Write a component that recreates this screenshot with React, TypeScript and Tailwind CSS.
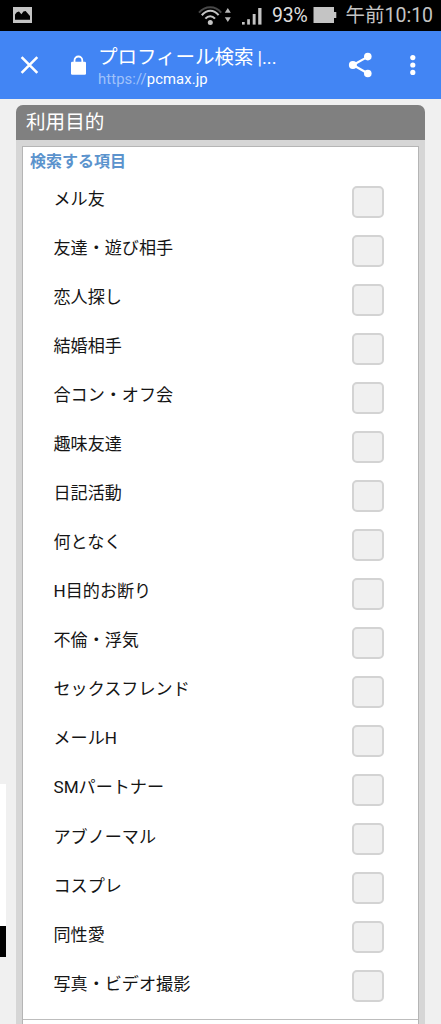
const items = [
  'メル友',
  '友達・遊び相手',
  '恋人探し',
  '結婚相手',
  '合コン・オフ会',
  '趣味友達',
  '日記活動',
  '何となく',
  'H目的お断り',
  '不倫・浮気',
  'セックスフレンド',
  'メールH',
  'SMパートナー',
  'アブノーマル',
  'コスプレ',
  '同性愛',
  '写真・ビデオ撮影',
];

function StatusBar() {
  return (
    <div className="flex h-[30.5px] shrink-0 items-center bg-black pl-[13px] text-[#c4c4c4]">
      <svg className="shrink-0" width="19" height="16" viewBox="0 0 19 16">
        <rect width="19" height="16" fill="#c4c4c4" />
        <path d="M2 12.8V7.5L3.8 5.2L6 4.4L8.4 7.2L10.4 4.4L12.6 4L17 9V12.8Z" fill="#000" />
      </svg>
      <svg className="ml-[166px] shrink-0" width="34" height="22" viewBox="0 0 34 22" fill="none">
        <path d="M1 8.6C7.2 1.5 17.4 1.5 23.2 8.6" stroke="#484848" strokeWidth="2" />
        <path d="M3.8 11.2C9 5.3 15.8 5.3 20.6 11.2" stroke="#c4c4c4" strokeWidth="2.1" />
        <path d="M7.4 14.6C10.3 11.4 14.1 11.4 17 14.6" stroke="#c4c4c4" strokeWidth="2.1" />
        <circle cx="12.3" cy="18.4" r="2.5" fill="#c4c4c4" />
        <path d="M26.8 8.8L29.8 4L32.8 8.8ZM26.8 13.2L29.8 18L32.8 13.2Z" fill="#b8b8b8" />
      </svg>
      <svg className="ml-[9px] shrink-0" width="22" height="20" viewBox="0 0 22 20" fill="#c4c4c4">
        <rect x="1" y="17" width="2.7" height="2.6" />
        <rect x="6.2" y="14.2" width="2.7" height="5.4" />
        <rect x="11.7" y="9" width="2.9" height="10.6" />
        <rect x="17.2" y="3" width="3.3" height="16.6" />
      </svg>
      <span className="ml-[9px] mt-[2px] w-[37px] shrink-0 whitespace-nowrap text-[19.4px] leading-[30px] tracking-[-0.1px] text-[#dedede]">93%</span>
      <svg className="ml-[4px] shrink-0" width="24" height="16" viewBox="0 0 24 16" fill="#c4c4c4">
        <path d="M0.5 0H21V5H23.3V11H21V16H0.5Z" />
      </svg>
      <span className="ml-[8.5px] mt-[2px] shrink-0 whitespace-nowrap text-[19.5px] leading-[30px]">午前10:10</span>
    </div>
  );
}

function Toolbar() {
  return (
    <header className="flex h-[68.5px] shrink-0 items-center bg-[#4285f4] text-white">
      <svg className="ml-[20px] shrink-0" width="19" height="18" viewBox="0 0 19 18">
        <path d="M1.6 1.2L17.3 16.8M17.3 1.2L1.6 16.8" stroke="#fff" strokeWidth="2.6" />
      </svg>
      <svg className="ml-[31px] shrink-0" width="17" height="20" viewBox="0 0 17 20">
        <path d="M4.5 8V5.4A3.9 3.9 0 0 1 12.3 5.4V8" fill="none" stroke="#fff" strokeWidth="1.8" />
        <rect x="1" y="6.7" width="15" height="13" rx="1.3" fill="#fff" />
      </svg>
      <div className="ml-[11px] mt-[5px] w-[190px] shrink-0">
        <div className="whitespace-nowrap text-[19.5px] leading-[24px]">
          プロフィール検索 <span className="-ml-px text-[18.5px]">|...</span>
        </div>
        <div className="-mt-px whitespace-nowrap text-[14.8px] leading-[20px] tracking-[0.1px]">
          <span className="text-[#a0c2fa]">https://</span>pcmax.jp
        </div>
      </div>
      <svg className="ml-[60px] shrink-0" width="25" height="26" viewBox="0 0 25 26">
        <path d="M20 4.6L5 13L20 21.5" fill="none" stroke="#fff" strokeWidth="2.2" />
        <circle cx="19.8" cy="4.6" r="3.8" fill="#fff" />
        <circle cx="4.9" cy="13" r="4" fill="#fff" />
        <circle cx="19.8" cy="21.5" r="3.8" fill="#fff" />
      </svg>
      <svg className="ml-[36px] shrink-0" width="8" height="22" viewBox="0 0 8 22" fill="#fff">
        <circle cx="3.8" cy="3.6" r="2.6" />
        <circle cx="3.8" cy="11" r="2.6" />
        <circle cx="3.8" cy="18.4" r="2.6" />
      </svg>
    </header>
  );
}

export default function App() {
  return (
    <div className="relative flex h-[1024px] w-[441px] flex-col overflow-hidden bg-[#f0f0f0] font-[Roboto,'Noto_Sans_CJK_JP',sans-serif]">
      <StatusBar />
      <Toolbar />
      <main className="mx-[16px] mt-[6px] flex flex-1 flex-col overflow-hidden rounded-t-[7px] bg-[#d6d6d6]">
        <h1 className="h-[35px] shrink-0 bg-[#808080] pl-[10px] text-[19.6px] leading-[36px] text-white">利用目的</h1>
        <section className="mx-[6px] mt-[6px] flex-1 border-x border-t border-[#b5b5b5] bg-white">
          <h2 className="h-[30px] pl-[7px] text-[16px] font-bold leading-[29px] text-[#5b93cd]">検索する項目</h2>
          <ul className="h-[843px] border-b border-[#bdbdbd]">
            {items.map((item) => (
              <li key={item} className="flex h-[49.04px] items-center justify-between pl-[30.5px] pr-[34.5px]">
                <span className="-mt-[4.8px] whitespace-nowrap text-[17.1px] leading-[24px] text-[#151515]">{item}</span>
                <span
                  role="checkbox"
                  aria-checked="false"
                  aria-label={item}
                  className="size-[32px] rounded-[5px] border-2 border-[#d3d3d3] bg-[#f0f0f0]"
                />
              </li>
            ))}
          </ul>
        </section>
      </main>
      <div className="absolute left-0 top-[784px] h-[142px] w-[6px] bg-white" />
      <div className="absolute left-0 top-[926px] h-[31px] w-[6px] bg-black" />
    </div>
  );
}
